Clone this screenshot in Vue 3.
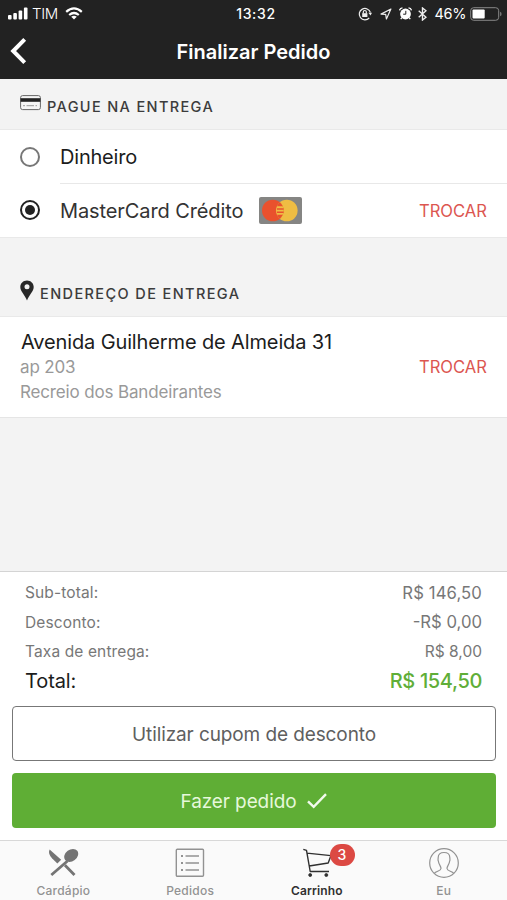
<script setup>
const totals = [
  { label: 'Sub-total:', value: 'R$ 146,50', kind: 'sub' },
  { label: 'Desconto:', value: '-R$ 0,00', kind: 'discount' },
  { label: 'Taxa de entrega:', value: 'R$ 8,00', kind: 'fee' },
]
</script>

<template>
  <div class="screen">
    <header class="top">
      <div class="status">
        <div class="status-left">
          <svg class="signal" width="20" height="13" viewBox="0 0 20 13" fill="#fff">
            <rect x="0" y="8" width="3.6" height="4.5" rx="1" />
            <rect x="5.3" y="6" width="3.6" height="6.5" rx="1" />
            <rect x="10.6" y="3.5" width="3.6" height="9" rx="1" />
            <rect x="15.9" y="0.5" width="3.6" height="12" rx="1" />
          </svg>
          <span class="carrier">TIM</span>
          <svg class="wifi" width="18" height="13" viewBox="0 0 18 13" fill="none" stroke="#fff" stroke-width="2.2">
            <path d="M1.2 4.9Q9-2 16.8 4.9" />
            <path d="M4.2 8Q9 4 13.8 8" />
            <path d="M9 12.5L6.2 9.8Q9 7.8 11.8 9.8Z" fill="#fff" stroke="none" />
          </svg>
        </div>
        <span class="clock">13:32</span>
        <div class="status-right">
          <svg width="14" height="14" viewBox="0 0 14 14" fill="none" stroke="#eee" stroke-width="1.2">
            <path d="M11.2 11A5.7 5.7 0 1 1 12.4 5.5" />
            <path d="M10.4 5.8H14L12.5 8.5Z" fill="#eee" stroke="none" />
            <rect x="4.2" y="6.2" width="5.2" height="3.8" fill="#eee" stroke="none" />
            <path d="M5.3 6.5V5a1.5 1.5 0 0 1 3 0V6.5" />
          </svg>
          <svg class="location" width="12" height="12" viewBox="0 0 12 12" fill="none" stroke="#eee" stroke-width="1.2" stroke-linejoin="round">
            <path d="M10.9 1L1 6.1L5.7 6.4L6.4 11Z" />
          </svg>
          <svg class="alarm" width="13" height="13" viewBox="0 0 13 13">
            <circle cx="6.5" cy="7" r="5.4" fill="#fff" />
            <path d="M.5 3.3Q1 1 3.5.8M9.5.8Q12 1 12.5 3.3M2.9 10.7L1.7 12.2M10.1 10.7L11.3 12.2" fill="none" stroke="#fff" stroke-width="1.3" />
            <path d="M6.8 3.8V7.2H4.2" fill="none" stroke="#222" stroke-width="1" />
          </svg>
          <svg class="bluetooth" width="9" height="14" viewBox="0 0 9 14" fill="none" stroke="#eee" stroke-width="1.4">
            <path d="M.7 3.8L8 10.2L4.5 13V1L8 3.8L.7 10.2" />
          </svg>
          <span class="percent">46%</span>
          <svg class="battery" width="32" height="14" viewBox="0 0 32 14">
            <rect x=".7" y=".7" width="28" height="12.6" rx="3" fill="none" stroke="#888" />
            <rect x="2.5" y="2.4" width="12.2" height="9.2" rx="1" fill="#fff" />
            <path d="M30.2 4.7Q31.5 5.2 31.5 7T30.2 9.3Z" fill="#888" />
          </svg>
        </div>
      </div>
      <div class="nav">
        <svg class="back" width="17" height="28" viewBox="0 0 17 28" fill="none" stroke="#fff" stroke-width="4">
          <path d="M14.7 2.4L3.2 14L14.7 25.6" />
        </svg>
        <h1>Finalizar Pedido</h1>
      </div>
    </header>

    <main>
      <h2 class="section pay">
        <svg class="card-icon" width="21" height="16" viewBox="0 0 21 16">
          <rect x=".6" y=".6" width="19.8" height="14" rx="2" fill="#f5f5f5" stroke="#666" />
          <path d="M.6 3.2H20.4V6.8H.6Z" fill="#222" />
          <path d="M3 10.7H5M6.5 10.7H14M15.5 10.7H17" stroke="#999" />
        </svg>
        <span>PAGUE NA ENTREGA</span>
      </h2>
      <section class="options">
        <div class="option">
          <span class="radio"></span>
          <div class="option-body"><span class="cash">Dinheiro</span></div>
        </div>
        <div class="option second">
          <span class="radio checked"></span>
          <div class="option-body divided">
            <span class="card-name">MasterCard Crédito</span>
            <svg class="mastercard" width="43" height="27" viewBox="0 0 43 27">
              <rect width="43" height="27" rx="2" fill="#858583" />
              <circle cx="27.8" cy="13.5" r="10.8" fill="#efbd43" />
              <circle cx="13.8" cy="13.5" r="10.8" fill="#e9512d" />
              <path d="M20.8 5.3A10.8 10.8 0 0 1 20.8 21.7A10.8 10.8 0 0 1 20.8 5.3Z" fill="#efbd43" />
              <path d="M20.8 5.3A10.8 10.8 0 0 0 18 9.3H23.6A10.8 10.8 0 0 0 20.8 5.3ZM20.8 21.7A10.8 10.8 0 0 1 18 17.7H23.6A10.8 10.8 0 0 1 20.8 21.7Z" fill="#e9512d" />
              <path d="M18 12H24.6M18 15.2H24.6" stroke="#e9512d" stroke-width="1.6" />
            </svg>
            <a class="change">TROCAR</a>
          </div>
        </div>
      </section>

      <h2 class="section delivery">
        <svg class="pin" width="14" height="21" viewBox="0 0 14 21">
          <path fill="#282828" fill-rule="evenodd" d="M7 .4C3.2.4.3 3.2.3 7C.3 11.5 5 15 7 20.4C9 15 13.7 11.5 13.7 7C13.7 3.2 10.8.4 7 .4ZM7 4.3A2.5 2.5 0 1 1 7 9.3A2.5 2.5 0 0 1 7 4.3Z" />
        </svg>
        <span>ENDEREÇO DE ENTREGA</span>
      </h2>
      <section class="address">
        <div class="lines">
          <span class="street">Avenida Guilherme de Almeida 31</span>
          <span class="unit">ap 203</span>
          <span class="district">Recreio dos Bandeirantes</span>
        </div>
        <a class="change">TROCAR</a>
      </section>
    </main>

    <section class="summary">
      <dl>
        <div v-for="row in totals" :key="row.kind" class="row" :class="row.kind">
          <dt>{{ row.label }}</dt>
          <dd>{{ row.value }}</dd>
        </div>
        <div class="row total">
          <dt>Total:</dt>
          <dd>R$ 154,50</dd>
        </div>
      </dl>
      <button class="coupon"><span>Utilizar cupom de desconto</span></button>
      <button class="order">
        <span>Fazer pedido</span>
        <svg width="20" height="16" viewBox="0 0 20 16" fill="none" stroke="#f2faed" stroke-width="2.4">
          <path d="M1 8.3L6.7 13.8L19 1.2" />
        </svg>
      </button>
    </section>

    <nav class="tabs">
      <a class="tab menu">
        <svg width="32" height="30" viewBox="0 0 32 30">
          <path d="M18 17.2L27.5 27M20.5 13L4.3 27" stroke="#747474" stroke-width="2.8" fill="none" />
          <path d="M2.6 1.4C1.2 4.2 2.2 7.2 5 10.2L10.3 15.6L14.2 11.8Z" fill="#747474" />
          <ellipse cx="24.2" cy="7.4" rx="7.6" ry="5.8" transform="rotate(-37 24.2 7.4)" fill="#747474" />
        </svg>
        <span>Cardápio</span>
      </a>
      <a class="tab orders">
        <svg width="32" height="30" viewBox="0 0 32 30" fill="none" stroke="#929292" stroke-width="1.4">
          <rect x="2.3" y="1.3" width="27.2" height="27" rx="1" />
          <path d="M11.5 8H25M11.5 15H25M11.5 22H25" />
          <path d="M7 8H9M7 15H9M7 22H9" stroke-width="2" />
        </svg>
        <span>Pedidos</span>
      </a>
      <a class="tab cart active">
        <svg width="32" height="30" viewBox="0 0 32 30" fill="none" stroke="#303030" stroke-width="1.4" stroke-linejoin="round">
          <path d="M2.3 1.4L5.5 2.4L9.2 23.5H28M5.9 5.1L30 7.6L27.2 15L8.2 18" />
          <circle cx="9.2" cy="27" r="1.5" fill="#303030" stroke-width=".8" />
          <circle cx="25.3" cy="27" r="1.5" fill="#303030" stroke-width=".8" />
        </svg>
        <span>Carrinho</span>
        <b class="badge">3</b>
      </a>
      <a class="tab me">
        <svg width="32" height="30" viewBox="0 0 32 30" fill="none" stroke="#929292" stroke-width="1.2">
          <circle cx="16" cy="15" r="14.3" />
          <path d="M6.3 25.3C8.1 22.8 12.6 23.4 13 20.5C13.2 18.3 10.6 16.5 10.4 13.2C9.6 12.2 10.2 10.9 10.2 9.5C10.2 6.4 12.1 4.5 16 4.5S21.8 6.4 21.8 9.5C21.8 10.9 22.4 12.2 21.6 13.2C21.4 16.5 18.8 18.3 19 20.5C19.4 23.4 23.9 22.8 25.7 25.3" />
        </svg>
        <span>Eu</span>
      </a>
    </nav>
  </div>
</template>

<style>
body {
  margin: 0;
}
</style>

<style scoped>
.screen {
  display: flex;
  flex-direction: column;
  width: 507px;
  height: 900px;
  overflow: hidden;
  background: #f3f3f3;
  color: #1c1c1c;
  font-family: Inter, "Liberation Sans", sans-serif;
  box-sizing: border-box;
}
.screen * {
  box-sizing: border-box;
}
span, a, dt, dd, h1 {
  white-space: nowrap;
}
svg {
  display: block;
  flex: none;
}
.top {
  height: 79px;
  flex: none;
  background: #222;
  color: #fff;
}
.status {
  display: grid;
  grid-template-columns: 1fr auto 1fr;
  align-items: center;
  height: 27px;
  padding: 0 5px 0 8px;
}
.status-left, .status-right {
  display: flex;
  align-items: center;
}
.status-right {
  justify-content: flex-end;
}
.carrier {
  margin-left: 4px;
  font-size: 15px;
  font-weight: 300;
  letter-spacing: -0.4px;
}
.wifi {
  margin-left: 7px;
}
.clock {
  padding-left: 2px;
  font-size: 14px;
  font-weight: 500;
  letter-spacing: 0.7px;
}
.location { margin-left: 8px; }
.alarm { margin-left: 7px; }
.bluetooth { margin-left: 6px; }
.percent {
  margin-left: 8px;
  font-size: 14.5px;
  letter-spacing: -0.4px;
}
.battery { margin-left: 4px; }
.nav {
  display: grid;
  grid-template-columns: 17px 1fr 17px;
  align-items: center;
  height: 49px;
  padding: 0 10px;
}
.back { margin-top: -1px; }
.nav h1 {
  margin: 0;
  text-align: center;
  font-size: 20px;
  line-height: 24px;
  font-weight: 600;
  letter-spacing: 0;
}
.section {
  display: flex;
  margin: 0;
  padding-left: 20px;
  color: #3c3c3c;
  font-size: 14.5px;
  line-height: 20px;
  font-weight: 500;
  border-bottom: 1px solid #e9e9e9;
}
.pay {
  height: 51px;
  padding-top: 16px;
  gap: 6px;
  letter-spacing: 1.36px;
}
.pay span { margin-top: 2px; }
.delivery {
  height: 79px;
  padding-top: 42px;
  gap: 6px;
  letter-spacing: 1.4px;
}
.delivery span { margin-top: 4px; }
.options {
  height: 108px;
  background: #fff;
  border-bottom: 1px solid #e9e9e9;
}
.option {
  display: flex;
  align-items: center;
  height: 53px;
  padding-left: 20px;
  font-size: 20px;
}
.second { height: 54px; }
.option-body {
  display: flex;
  align-items: center;
  flex: 1;
  height: 100%;
  margin-left: 20px;
  padding-right: 20px;
}
.divided { border-top: 1px solid #e8e8e8; }
.cash { letter-spacing: -0.2px; }
.card-name {
  letter-spacing: -0.1px;
  color: #333;
}
.radio {
  display: flex;
  align-items: center;
  justify-content: center;
  width: 20px;
  height: 20px;
  border: 2px solid #777;
  border-radius: 50%;
}
.checked { border-color: #222; }
.checked::after {
  content: "";
  width: 10px;
  height: 10px;
  border-radius: 50%;
  background: #222;
}
.mastercard { margin-left: 16px; }
.change {
  margin-left: auto;
  color: #dc5650;
  font-size: 16.6px;
  letter-spacing: 0;
}
.address {
  display: flex;
  align-items: center;
  height: 101px;
  padding: 0 20px;
  background: #fff;
  border-bottom: 1px solid #e5e5e5;
}
.lines {
  display: flex;
  flex-direction: column;
}
.street {
  padding-left: 1px;
  font-size: 20px;
  line-height: 25px;
  letter-spacing: -0.13px;
}
.unit, .district {
  color: #999;
  font-size: 17px;
  line-height: 25px;
  letter-spacing: -0.15px;
}
.summary {
  height: 269px;
  margin-top: auto;
  padding: 6px 11px 0 12px;
  flex: none;
  background: #fff;
  border-top: 1px solid #d4d4d4;
}
dl {
  margin: 0;
  padding: 0 14px 0 13px;
}
.row {
  display: flex;
  justify-content: space-between;
  align-items: center;
  height: 29px;
  color: #777;
  font-size: 15.5px;
}
.row dt { letter-spacing: 0.12px; }
.row.discount, .row.fee { padding-top: 1px; }
dd { margin: 0; }
.row.sub dd, .row.discount dd { font-size: 16.7px; }
.row.sub dd { letter-spacing: 0.1px; }
.row.total {
  height: 32px;
  color: #1c1c1c;
  font-size: 20px;
}
.total dt { letter-spacing: -0.1px; }
.total dd {
  color: #60ae38;
  font-weight: 500;
  letter-spacing: -0.35px;
}
button {
  display: flex;
  align-items: center;
  justify-content: center;
  width: 484px;
  height: 55px;
  padding: 1px 0 0;
  border-radius: 4px;
  font-family: inherit;
  font-size: 19px;
}
.coupon {
  margin-top: 9px;
  background: #fff;
  border: 1px solid #777;
  color: #5f5f5f;
  letter-spacing: -0.1px;
}
.order {
  gap: 11px;
  margin-top: 12px;
  background: #5fae35;
  border: 0;
  color: #e6f8db;
  letter-spacing: -0.1px;
}
.tabs {
  display: grid;
  grid-template-columns: repeat(4, 1fr);
  height: 60px;
  flex: none;
  border-top: 1px solid #d8d8d8;
  background: #fafafa;
}
.tab {
  position: relative;
  display: flex;
  flex-direction: column;
  align-items: center;
  padding-top: 7px;
  color: #929292;
  font-size: 12px;
  line-height: 16px;
  font-weight: 500;
  letter-spacing: 0.25px;
}
.tab span { margin-top: 5px; }
.active {
  color: #303030;
  font-weight: 600;
  letter-spacing: 0.15px;
}
.badge {
  position: absolute;
  top: 3px;
  left: 76px;
  width: 25px;
  height: 22px;
  border-radius: 11px;
  background: #dc4943;
  color: #fff;
  font-size: 14px;
  line-height: 22px;
  text-align: center;
  font-weight: 500;
}
</style>
